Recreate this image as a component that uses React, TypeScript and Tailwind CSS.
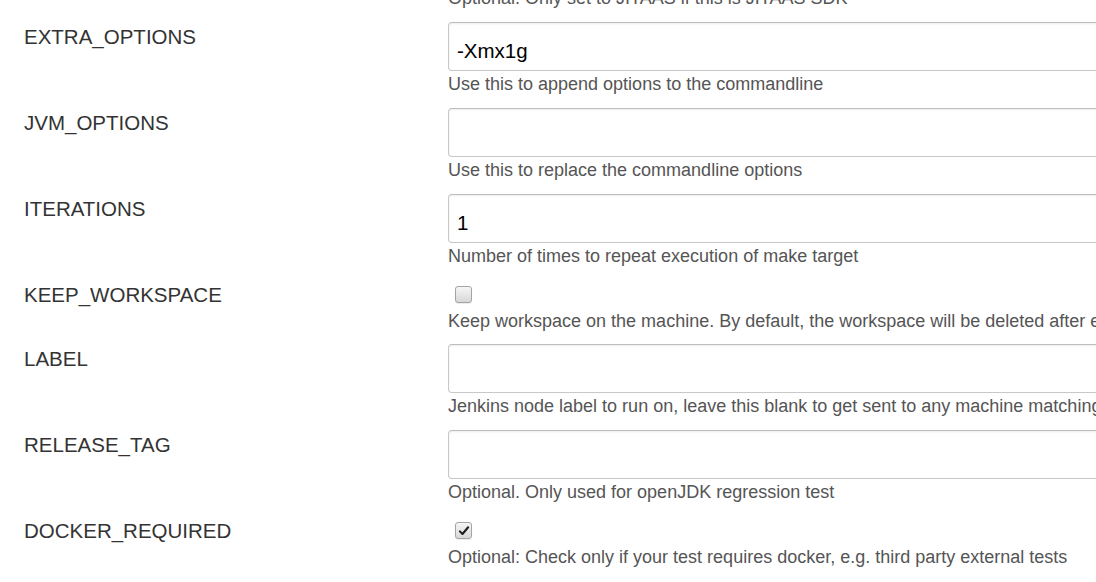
type Param =
  | { name: string; kind: "text"; value?: string; help: string }
  | { name: string; kind: "bool"; checked: boolean; help: string };

const params: Param[] = [
  { name: "EXTRA_OPTIONS", kind: "text", value: "-Xmx1g", help: "Use this to append options to the commandline" },
  { name: "JVM_OPTIONS", kind: "text", help: "Use this to replace the commandline options" },
  { name: "ITERATIONS", kind: "text", value: "1", help: "Number of times to repeat execution of make target" },
  {
    name: "KEEP_WORKSPACE",
    kind: "bool",
    checked: false,
    help: "Keep workspace on the machine. By default, the workspace will be deleted after each run",
  },
  {
    name: "LABEL",
    kind: "text",
    help: "Jenkins node label to run on, leave this blank to get sent to any machine matching the platform",
  },
  { name: "RELEASE_TAG", kind: "text", help: "Optional. Only used for openJDK regression test" },
  {
    name: "DOCKER_REQUIRED",
    kind: "bool",
    checked: true,
    help: "Optional: Check only if your test requires docker, e.g. third party external tests",
  },
];

function Checkbox({ checked }: { checked: boolean }) {
  return (
    <span className="ml-[7px] flex h-[17px] w-[17px] items-center justify-center rounded-[3px] border border-[#a4a4a4] bg-gradient-to-b from-[#f6f6f6] to-[#d8d8d8] shadow-[0_1px_1px_rgba(0,0,0,0.08)]">
      {checked && (
        <svg viewBox="0 0 16 16" className="h-[12px] w-[12px]">
          <path d="M2.5 8.5 L6 12 L13.5 3" fill="none" stroke="#1e1e1e" strokeWidth="2.8" strokeLinecap="round" strokeLinejoin="round" />
        </svg>
      )}
    </span>
  );
}

function HelpText({ children }: { children: string }) {
  return <div className="h-[24px] pt-[1px] whitespace-nowrap text-[18px] leading-[24px] text-[#555]">{children}</div>;
}

function ParamRow({ param }: { param: Param }) {
  return (
    <div className={param.kind === "text" ? "flex mb-[13px]" : "flex mb-[12px]"}>
      <div className="w-[424px] shrink-0 pt-[1px] text-[20.5px] leading-[28px] text-[#333]">{param.name}</div>
      <div className="w-[720px] shrink-0">
        {param.kind === "text" ? (
          <input
            readOnly
            defaultValue={param.value ?? ""}
            className="block h-[49px] w-full rounded-[4px] border border-[#c8c8c8] border-t-[#bdbdbd] bg-white pl-[8px] pt-[9px] pb-0 text-[20.5px] text-black shadow-[inset_0_1px_2px_rgba(0,0,0,0.08)] outline-none"
          />
        ) : (
          <div className="flex h-[28px] items-start pt-[6px]">
            <Checkbox checked={param.checked} />
          </div>
        )}
        <HelpText>{param.help}</HelpText>
      </div>
    </div>
  );
}

export default function App() {
  return (
    <div className="h-[582px] w-[1096px] overflow-hidden bg-white font-['Liberation_Sans',Arial,Helvetica,sans-serif]">
      <div className="-mt-[15px] px-[24px]">
        {/* tail of the parameter above the fold */}
        <div className="mb-[13px] flex">
          <div className="w-[424px] shrink-0" />
          <HelpText>Optional. Only set to JITAAS if this is JITAAS SDK</HelpText>
        </div>
        {params.map((p) => (
          <ParamRow key={p.name} param={p} />
        ))}
      </div>
    </div>
  );
}
